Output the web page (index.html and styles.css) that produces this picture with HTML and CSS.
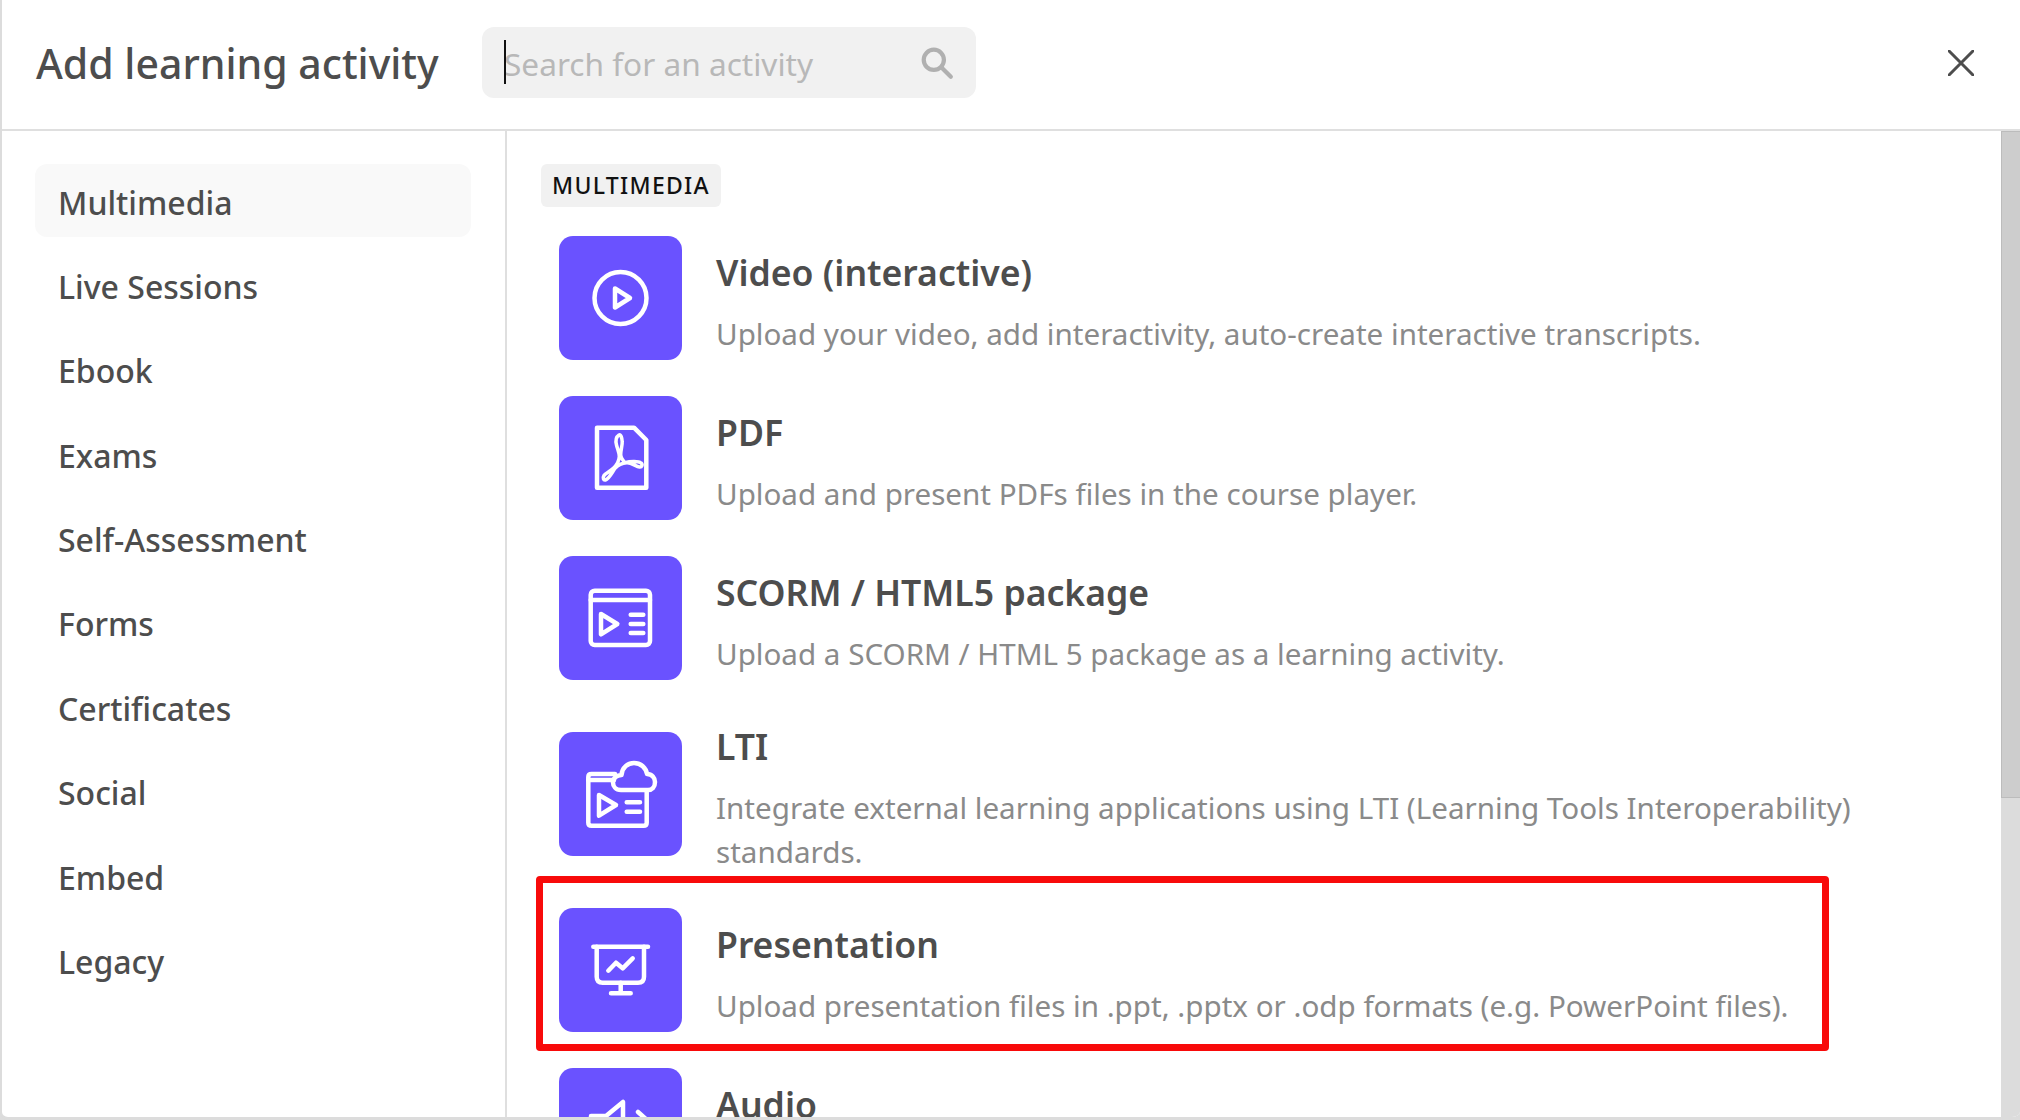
FILE: index.html
```html
<!DOCTYPE html>
<html lang="en">
<head>
    <meta charset="UTF-8">
    <title>Add learning activity</title>
    <link rel="stylesheet" href="styles.css">
</head>
<body>
    <div class="modal">
        <div class="header">
            <h1 class="title">Add learning activity</h1>
            <div class="search">
                <span class="caret"></span>
                <span class="placeholder">Search for an activity</span>
                <svg class="search-icon" viewBox="0 0 32 32"><circle cx="13" cy="13" r="9.5"/><path d="M20 20l9 9"/></svg>
            </div>
            <svg class="close" viewBox="0 0 26 26"><path d="M1 1l24 24M25 1L1 25"/></svg>
        </div>

        <div class="body">
            <div class="sidebar">
                <a class="nav-item active">Multimedia</a>
                <a class="nav-item">Live Sessions</a>
                <a class="nav-item">Ebook</a>
                <a class="nav-item">Exams</a>
                <a class="nav-item">Self-Assessment</a>
                <a class="nav-item">Forms</a>
                <a class="nav-item">Certificates</a>
                <a class="nav-item">Social</a>
                <a class="nav-item">Embed</a>
                <a class="nav-item">Legacy</a>
            </div>

            <div class="content">
                <span class="badge">MULTIMEDIA</span>

                <div class="activity">
                    <div class="activity-icon">
                        <svg viewBox="0 0 123 124"><circle cx="61.5" cy="62" r="26"/><path d="M56 52.5L71 62L56 71.5Z"/></svg>
                    </div>
                    <div class="activity-text">
                        <div class="activity-title">Video (interactive)</div>
                        <div class="activity-desc">Upload your video, add interactivity, auto-create interactive transcripts.</div>
                    </div>
                </div>

                <div class="activity">
                    <div class="activity-icon">
                        <svg viewBox="0 0 123 124"><path d="M38 31.7H75L87.3 44V91.7H38Z"/><path class="thin" d="M60 39C57 41 56.5 45 57.5 49C58.5 53 60.5 57 60.3 60.7C60 65 57.5 69.5 54.3 72.3C51 75.5 46.5 77 45 79.5C43.5 82 44.5 84.5 46.5 84C50 83 53 76.5 56 72.3C59 69 63.5 67 67.7 66.7C72 66.3 77 70.5 80.5 71C83 71.3 84 68.5 82 67C79.5 65 71.5 65 66 66.7C63.5 64 61.7 62 61.7 58.5C61.7 54 63.5 49 63.2 45.5C63 42 62 38 60 39Z"/></svg>
                    </div>
                    <div class="activity-text">
                        <div class="activity-title">PDF</div>
                        <div class="activity-desc">Upload and present PDFs files in the course player.</div>
                    </div>
                </div>

                <div class="activity">
                    <div class="activity-icon">
                        <svg viewBox="0 0 123 124"><rect x="31.7" y="34.7" width="59.3" height="54.3" rx="4"/><path d="M31.7 44H91"/><path d="M42 58L58.3 68L42 78.3Z"/><path d="M71.7 58.7H84.3M71.7 68H84.3M71.7 77H84.3"/></svg>
                    </div>
                    <div class="activity-text">
                        <div class="activity-title">SCORM / HTML5 package</div>
                        <div class="activity-desc">Upload a SCORM / HTML 5 package as a learning activity.</div>
                    </div>
                </div>

                <div class="activity">
                    <div class="activity-icon">
                        <svg viewBox="0 0 123 124"><path d="M56 42H32.5Q29.3 42 29.3 45V90.7Q29.3 93.7 32.5 93.7H84.7Q87.7 93.7 87.7 90.7V59.7"/><path d="M29.3 48H55"/><path d="M40 63L57 73L40 83.7Z"/><path d="M67.7 70.3H81M67.7 79.7H81"/><path d="M62 58C56.5 58 54 54 54 50.5C54 46 58 43 62.5 43C63 35.5 69 31 75 31C82 31 87 36 88 42C93 42 96 46 96 50C96 55 93 58 89 58Z"/></svg>
                    </div>
                    <div class="activity-text">
                        <div class="activity-title">LTI</div>
                        <div class="activity-desc">Integrate external learning applications using LTI (Learning Tools Interoperability) standards.</div>
                    </div>
                </div>

                <div class="activity">
                    <div class="activity-icon">
                        <svg viewBox="0 0 123 124"><path d="M34.3 38.7H89"/><path d="M37.7 38.7V68.7Q37.7 74.7 43.7 74.7H79Q85 74.7 85 68.7V38.7"/><path d="M61.7 74.7V85.3M52 85.3H71.7"/><path d="M49.3 62.7L57 54.7L63.7 60.3L73.7 50.3"/></svg>
                    </div>
                    <div class="activity-text">
                        <div class="activity-title">Presentation</div>
                        <div class="activity-desc">Upload presentation files in .ppt, .pptx or .odp formats (e.g. PowerPoint files).</div>
                    </div>
                </div>

                <div class="activity">
                    <div class="activity-icon">
                        <svg viewBox="0 0 123 124"><path d="M32 48H47L64 34V70L47 58H32Z"/><path d="M79 44L88 52"/></svg>
                    </div>
                    <div class="activity-text">
                        <div class="activity-title">Audio</div>
                    </div>
                </div>

                <div class="highlight"></div>
            </div>

            <div class="scrollbar"><div class="scrollbar-thumb"></div></div>
        </div>
    </div>
</body>
</html>
```

FILE: styles.css
```css
* {
    margin: 0;
    padding: 0;
    box-sizing: border-box;
}

html, body {
    height: 100%;
    overflow: hidden;
}

body {
    font-family: "Noto Sans", sans-serif;
    background: #dcdcdc;
    color: #4d4d4d;
}

.modal {
    height: 1120px;
    background: white;
    border-left: 2px solid #dcdcdc;
    border-bottom: 3px solid #dcdcdc;
    border-bottom-left-radius: 8px;
    border-bottom-right-radius: 8px;
    display: flex;
    flex-direction: column;
    overflow: hidden;
}

.header {
    height: 131px;
    flex-shrink: 0;
    border-bottom: 2px solid #dfdfdf;
    display: flex;
    align-items: center;
    padding-left: 34px;
    padding-bottom: 4px;
}

.title {
    font-size: 41px;
    font-weight: 500;
    width: 446px;
    flex-shrink: 0;
}

.search {
    width: 494px;
    height: 71px;
    background: #f1f1f1;
    border-radius: 12px;
    display: flex;
    align-items: center;
    padding: 0 22px;
    position: relative;
}

.caret {
    position: absolute;
    left: 22px;
    top: 13px;
    width: 2px;
    height: 44px;
    background: #111;
}

.placeholder {
    font-size: 31.6px;
    color: #b8b8b8;
    flex: 1;
    padding-top: 2px;
}

.search-icon {
    width: 34px;
    height: 34px;
    fill: none;
    stroke: #b0b0b0;
    stroke-width: 4;
    stroke-linecap: round;
}

.close {
    width: 26px;
    height: 26px;
    margin-left: auto;
    margin-right: 46px;
    fill: none;
    stroke: #4d4d4d;
    stroke-width: 3;
    stroke-linecap: round;
}

.body {
    flex: 1;
    display: flex;
    min-height: 0;
}

.sidebar {
    width: 505px;
    flex-shrink: 0;
    border-right: 2px solid #dfdfdf;
    padding: 33px 34px 0 33px;
}

.nav-item {
    display: flex;
    align-items: center;
    height: 73px;
    margin-bottom: 11.4px;
    padding-left: 23px;
    padding-top: 3px;
    border-radius: 12px;
    font-size: 32px;
    font-weight: 500;
}

.active {
    background: #f9f9f9;
}

.content {
    flex: 1;
    position: relative;
    padding: 33px 0 0 34px;
    overflow: hidden;
}

.badge {
    display: inline-block;
    height: 43px;
    line-height: 43px;
    padding: 0 11px;
    background: #f1f1f1;
    border-radius: 6px;
    font-size: 23px;
    font-weight: 500;
    letter-spacing: 1.3px;
    color: #111;
    vertical-align: top;
}

.activity {
    display: flex;
    align-items: center;
    gap: 34px;
    width: 1340px;
    margin-top: 36px;
    padding-left: 18px;
}

.badge + .activity {
    margin-top: 29px;
}

.activity-icon {
    width: 123px;
    height: 124px;
    flex-shrink: 0;
    background: #6a52ff;
    border-radius: 14px;
}

.activity-icon svg {
    display: block;
    width: 123px;
    height: 124px;
    fill: none;
    stroke: white;
    stroke-width: 4.5;
    stroke-linecap: round;
    stroke-linejoin: round;
}

.activity-icon .thin {
    stroke-width: 3.5;
}

.activity-text {
    min-height: 112px;
}

.activity-title {
    font-size: 35.6px;
    font-weight: 600;
    line-height: 44px;
    margin-top: 8px;
}

.activity-desc {
    font-size: 29.6px;
    line-height: 44px;
    color: #8a8a8a;
    margin-top: 18px;
    margin-bottom: -2px;
}

/* recuadro rojo sobre Presentation */
.highlight {
    position: absolute;
    left: 29px;
    top: 745px;
    width: 1293px;
    height: 175px;
    border: 7px solid #f80a0a;
    border-radius: 4px;
}

.scrollbar {
    width: 19px;
    flex-shrink: 0;
    background: #dcdcdc;
}

.scrollbar-thumb {
    height: 667px;
    background: #cdcdcd;
    border: 1px solid #bcbcbc;
    border-width: 1px 0 1px 1px;
}
```
